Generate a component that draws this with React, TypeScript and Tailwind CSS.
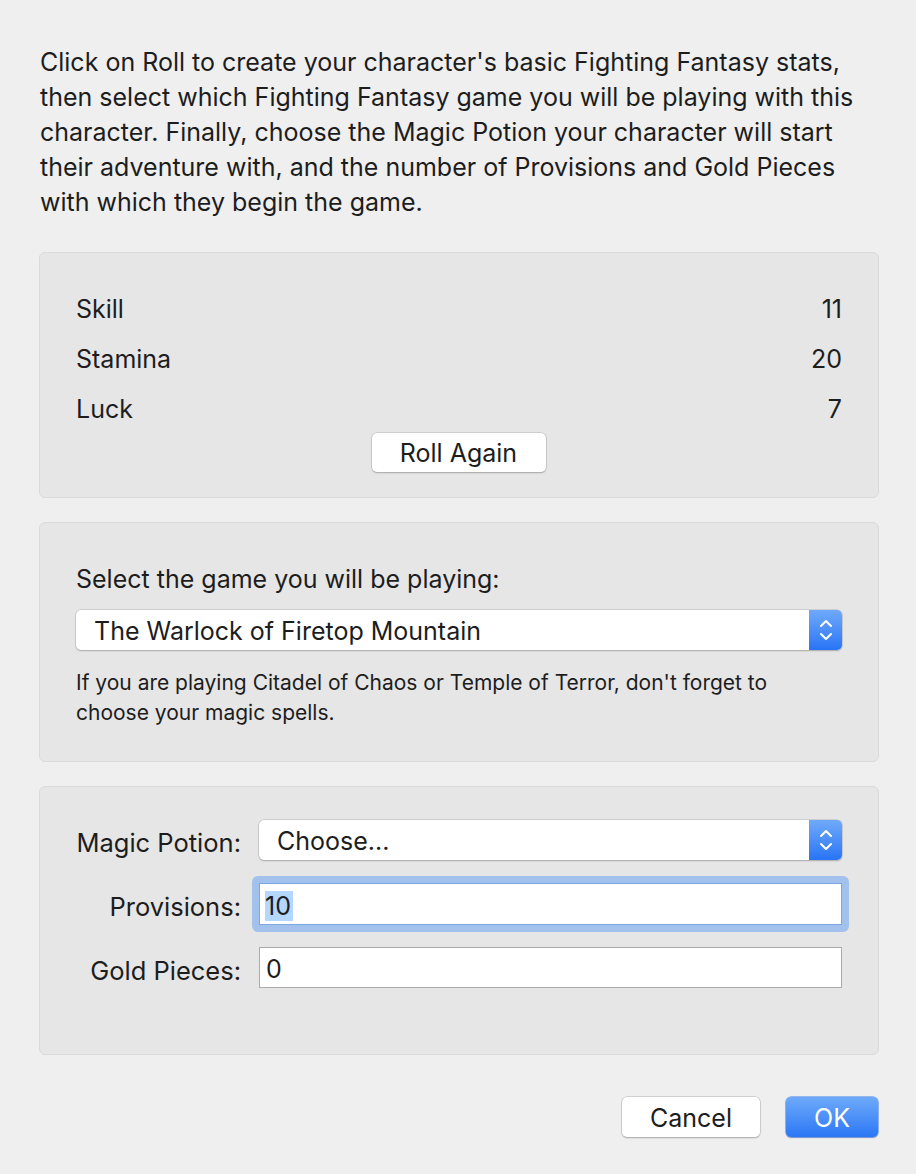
import React from "react";

function Stepper() {
  return (
    <div className="flex h-full w-[33px] items-center justify-center rounded-r-[5px] bg-gradient-to-b from-[#6fa9fa] to-[#2874f5]">
      <svg width="16" height="26" viewBox="0 0 16 26" fill="none" stroke="white" strokeWidth="2" strokeLinecap="round" strokeLinejoin="round">
        <path d="M3 9 L8 4 L13 9" />
        <path d="M3 17 L8 22 L13 17" />
      </svg>
    </div>
  );
}

function Select({ text }: { text: string }) {
  return (
    <div className="flex h-[40px] w-full items-stretch rounded-[5px] bg-white shadow-[0_0_0_0.5px_#b5b5b5,0_1px_1.5px_rgba(0,0,0,0.28)]">
      <div className="flex flex-1 items-center pl-[18px] pt-[2px] text-[25px] leading-[30px] text-[#1d1d1d]">{text}</div>
      <Stepper />
    </div>
  );
}

export default function App() {
  return (
    <div
      className="flex h-[1174px] w-[916px] flex-col bg-[#efefef] pl-[39px] pr-[37px] text-[#1d1d1d]"
      style={{ fontFamily: 'Inter, "Liberation Sans", Arial, sans-serif' }}
    >
      <p className="ml-px pt-[45px] text-[25px] leading-[35px]">
        Click on Roll to create your character's basic Fighting Fantasy stats, then select which Fighting Fantasy game you will be playing with this character. Finally, choose the Magic Potion your character will start their adventure with, and the number of Provisions and Gold Pieces with which they begin the game.
      </p>

      <div className="mt-[32px] flex h-[246px] flex-col rounded-[6px] border border-[#dadada] bg-[#e6e6e6] px-[36px] pt-[30px]">
        {[
          ["Skill", "11"],
          ["Stamina", "20"],
          ["Luck", "7"],
        ].map(([l, v]) => (
          <div key={l} className="flex h-[50px] items-center justify-between pt-[1px] text-[25px] leading-[30px]">
            <span>{l}</span>
            <span>{v}</span>
          </div>
        ))}
        <div className="flex justify-center">
          <button className="ml-[-1px] h-[39px] w-[174px] rounded-[5px] bg-white pt-[1px] text-[25px] leading-[30px] text-[#1d1d1d] shadow-[0_0_0_0.5px_#b5b5b5,0_1px_1.5px_rgba(0,0,0,0.3)]">
            Roll Again
          </button>
        </div>
      </div>

      <div className="mt-[24px] flex h-[240px] flex-col rounded-[6px] border border-[#dadada] bg-[#e6e6e6] px-[36px] pt-[41px]">
        <div className="text-[25px] leading-[30px]">Select the game you will be playing:</div>
        <div className="mt-[16px]">
          <Select text="The Warlock of Firetop Mountain" />
        </div>
        <p className="mt-[18px] text-[21px] leading-[30px]">
          If you are playing Citadel of Chaos or Temple of Terror, don't forget to choose your magic spells.
        </p>
      </div>

      <div className="mt-[24px] flex h-[269px] flex-col rounded-[6px] border border-[#dadada] bg-[#e6e6e6] pl-[36px] pr-[36px] pt-[33px]">
        <div className="flex h-[40px] items-center">
          <div className="w-[166px] shrink-0 pr-[1px] pt-[6px] text-right text-[25.5px] leading-[30px]">Magic Potion:</div>
          <div className="ml-[17px] flex-1">
            <Select text="Choose..." />
          </div>
        </div>
        <div className="mt-[23px] flex h-[42px] items-center">
          <div className="w-[166px] shrink-0 pr-[1px] pt-[6px] text-right text-[25.5px] leading-[30px]">Provisions:</div>
          <div className="relative ml-[17px] flex-1">
            <div className="absolute -inset-[7px] rounded-[6px] bg-[#a2c1ec]" />
            <div className="relative flex h-[42px] items-center border border-[#7ea6e0] bg-white pl-[5px] pt-[3px] text-[25px] leading-[30px]">
              <span className="bg-[#b3d7ff] pr-[2px]">10</span>
            </div>
          </div>
        </div>
        <div className="mt-[22px] flex h-[41px] items-center">
          <div className="w-[166px] shrink-0 pr-[1px] pt-[6px] text-right text-[25.5px] leading-[30px]">Gold Pieces:</div>
          <div className="ml-[17px] flex h-[41px] flex-1 items-center border border-[#ababab] bg-white pl-[6px] pt-[3px] text-[25px] leading-[30px]">
            0
          </div>
        </div>
      </div>

      <div className="mr-px mt-[42px] flex justify-end gap-[26px]">
        <button className="h-[40px] w-[138px] rounded-[5px] bg-white pt-[1px] text-[25px] leading-[30px] text-[#1d1d1d] shadow-[0_0_0_0.5px_#b5b5b5,0_1px_1.5px_rgba(0,0,0,0.3)]">
          Cancel
        </button>
        <button className="h-[40px] w-[92px] rounded-[5px] bg-gradient-to-b from-[#6eaafa] to-[#2a76f4] pt-[1px] text-[25px] leading-[30px] text-white shadow-[0_0_0_0.5px_#3a7ee8,0_1px_1.5px_rgba(0,0,0,0.25)]">
          OK
        </button>
      </div>
    </div>
  );
}
